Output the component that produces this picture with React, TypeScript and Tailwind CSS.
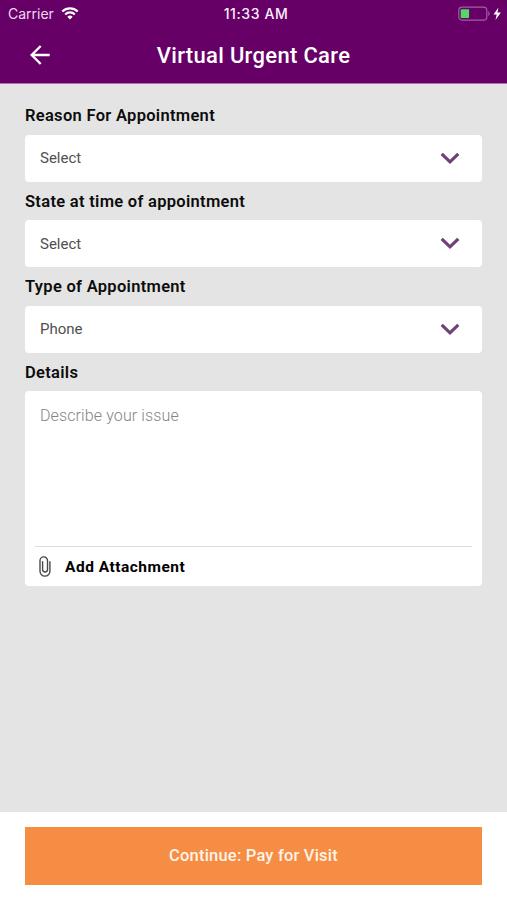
import { clsx } from "clsx";

interface SelectFieldProps {
  label: string;
  value: string;
  valueClass?: string;
}

function WifiIcon() {
  return (
    <svg width="18" height="13" viewBox="0 0 18 13" fill="none">
      <path d="M1.3 4.5a11 11 0 0 1 15.4 0" stroke="white" strokeWidth="2.3" />
      <path d="M4.2 7.4a6.8 6.8 0 0 1 9.6 0" stroke="white" strokeWidth="2.1" />
      <path d="M9 12.4 6.3 9.7a3.9 3.9 0 0 1 5.4 0Z" fill="white" />
    </svg>
  );
}

function BatteryIcon() {
  return (
    <svg width="44" height="16" viewBox="0 0 44 16" fill="none">
      <rect x="0.8" y="1.1" width="28" height="13" rx="3.2" stroke="#a060a0" strokeWidth="1.2" />
      <rect x="2.7" y="3.3" width="8.4" height="8.8" rx="0.8" fill="#53d769" />
      <path d="M30.3 5.2c1.7.6 1.7 4.2 0 4.8Z" fill="#a060a0" />
      <path d="M40.4 1.4 35.6 8.4h3.1l-1.2 5.6 5.4-7.4h-3.4Z" fill="white" />
    </svg>
  );
}

function BackIcon() {
  return (
    <svg width="22" height="20" viewBox="0 0 22 20" fill="none" stroke="white" strokeWidth="2.4">
      <path d="M20.7 10H2.9M11.7 1 2.7 10l9 9" />
    </svg>
  );
}

function ChevronIcon() {
  return (
    <svg width="20" height="13" viewBox="0 0 20 13" fill="none" stroke="#704078" strokeWidth="3.2">
      <path d="m1.7 1.9 8.3 8 8.3-8" />
    </svg>
  );
}

function ClipIcon() {
  return (
    <svg width="12" height="21" viewBox="0 0 12 21" fill="none" stroke="#4a4a4a" strokeWidth="1.4" strokeLinecap="round">
      <path d="M8.5 5v8.6a2.45 2.45 0 0 1-4.9 0V5.6M8.5 5V4.6a3.75 3.75 0 0 0-7.5 0v10.6a4.9 4.9 0 0 0 9.9 0V5.6" />
    </svg>
  );
}

function FieldLabel({ children }: { children: string }) {
  return (
    <div className="h-[20px] pt-px text-[16.5px] leading-[19px] font-semibold tracking-[0.3px] whitespace-nowrap text-[#0c0c0c]">
      {children}
    </div>
  );
}

function SelectField({ label, value, valueClass }: SelectFieldProps) {
  return (
    <div className="h-[85.5px]">
      <FieldLabel>{label}</FieldLabel>
      <button className="mt-[9.5px] flex h-[47px] w-full items-center justify-between rounded-[4px] bg-white pr-[22px] pl-[15px]">
        <span className={clsx("pt-px text-[15px] text-[#505050]", valueClass)}>{value}</span>
        <ChevronIcon />
      </button>
    </div>
  );
}

export default function App() {
  return (
    <div className="flex h-[900px] w-[507px] flex-col overflow-hidden bg-[#e4e4e4] font-['Roboto',sans-serif]">
      {/* Status bar + header */}
      <header className="h-[84px] border-b border-[#b070b0] bg-[#660066] text-white">
        <div className="grid h-[27px] grid-cols-3 items-center pr-[5px] pl-[8px] font-['Inter',sans-serif] text-[14px]">
          <div className="flex items-center gap-[7px]">
            <span className="text-[#f0d8f0]">Carrier</span>
            <WifiIcon />
          </div>
          <span className="pl-[2px] text-center font-medium tracking-[0.6px] text-[#fbeffb]">11:33 AM</span>
          <div className="flex justify-end">
            <BatteryIcon />
          </div>
        </div>
        <div className="grid h-[56px] grid-cols-[60px_1fr_60px] items-center">
          <button className="pl-[29px]">
            <BackIcon />
          </button>
          <h1 className="pt-[2px] text-center text-[22px] leading-[28px] font-medium tracking-[0.32px] whitespace-nowrap">
            Virtual Urgent Care
          </h1>
        </div>
      </header>

      {/* Form */}
      <main className="flex-1 px-[25px] pt-[21px]">
        <SelectField label="Reason For Appointment" value="Select" />
        <SelectField label="State at time of appointment" value="Select" />
        <SelectField label="Type of Appointment" value="Phone" />
        <FieldLabel>Details</FieldLabel>
        <div className="mt-[9px] flex h-[195px] flex-col rounded-[4px] bg-white">
          <div className="flex-1 px-[15px] pt-[14px] text-[16px] leading-[22px] font-light tracking-[0.12px] text-[#858585]">
            <span>Describe your issue</span>
          </div>
          <button className="mx-[10px] flex h-[40px] items-center gap-[14px] border-t border-[#dedede] pl-[4px]">
            <ClipIcon />
            <span className="pt-[2px] text-[15.5px] leading-[20px] font-bold tracking-[0.5px] text-black">Add Attachment</span>
          </button>
        </div>
      </main>

      {/* Footer action */}
      <footer className="h-[88px] bg-white px-[25px] pt-[15px]">
        <button className="h-[58px] w-full bg-[#f58d45] text-[16.5px] font-medium tracking-[0.2px] text-[#fff3e8]">
          <span>Continue: Pay for Visit</span>
        </button>
      </footer>
    </div>
  );
}
